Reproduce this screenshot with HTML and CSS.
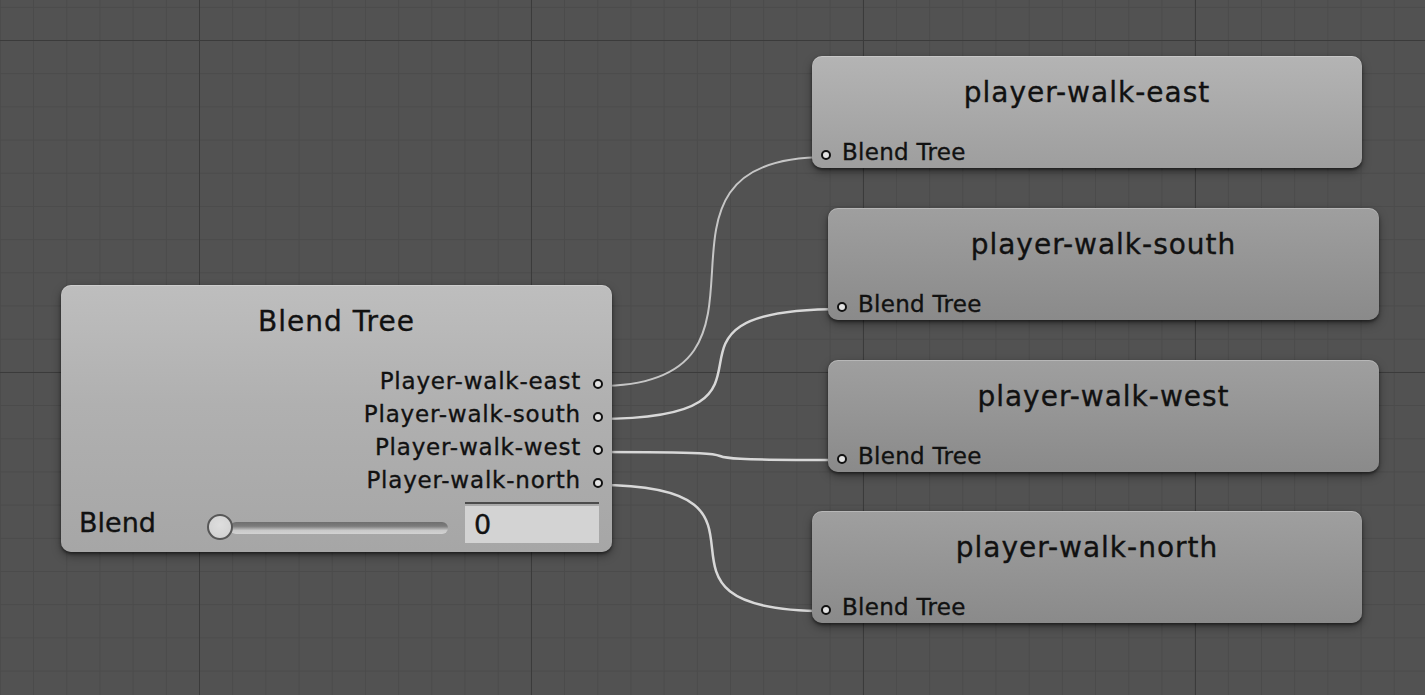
FILE: index.html
```html
<!DOCTYPE html>
<html lang="en">
<head>
<meta charset="utf-8">
<title>Blend Tree</title>
<link rel="stylesheet" href="styles.css">
</head>
<body>
<div class="graph">
  <svg class="wires" width="1425" height="695" viewBox="0 0 1425 695">
    <path class="wire wire-east" d="M598 386 C813 386 611 157 826 157"/>
    <path class="wire" d="M598 419 C823 419 617 309 842 309"/>
    <path class="wire" d="M598 452 C823 452 617 460 842 460"/>
    <path class="wire" d="M598 485 C813 485 611 611 826 611"/>
  </svg>

  <div class="node node-blend">
    <div class="node-title">Blend Tree</div>
    <ul class="outputs">
      <li class="port-row"><span>Player-walk-east</span><i class="port"></i></li>
      <li class="port-row"><span>Player-walk-south</span><i class="port"></i></li>
      <li class="port-row"><span>Player-walk-west</span><i class="port"></i></li>
      <li class="port-row"><span>Player-walk-north</span><i class="port"></i></li>
    </ul>
    <div class="param-row">
      <span class="param-label">Blend</span>
      <div class="slider">
        <div class="slider-track"></div>
        <div class="slider-thumb"></div>
      </div>
      <div class="field"><div class="field-inner">0</div></div>
    </div>
  </div>

  <div class="node node-clip node-light pos-east">
    <div class="node-title">player-walk-east</div>
    <div class="input-row"><i class="port"></i><span>Blend Tree</span></div>
  </div>
  <div class="node node-clip pos-south">
    <div class="node-title">player-walk-south</div>
    <div class="input-row"><i class="port"></i><span>Blend Tree</span></div>
  </div>
  <div class="node node-clip pos-west">
    <div class="node-title">player-walk-west</div>
    <div class="input-row"><i class="port"></i><span>Blend Tree</span></div>
  </div>
  <div class="node node-clip pos-north">
    <div class="node-title">player-walk-north</div>
    <div class="input-row"><i class="port"></i><span>Blend Tree</span></div>
  </div>
</div>
</body>
</html>
```

FILE: styles.css
```css
html, body {
  margin: 0;
  padding: 0;
  background: #525252;
}

body {
  font-family: "DejaVu Sans", "Liberation Sans", sans-serif;
}

.graph {
  position: relative;
  width: 1425px;
  height: 695px;
  overflow: hidden;
  background-color: #525252;
  background-image:
    linear-gradient(to right, #3b3b3b 1px, transparent 1px),
    linear-gradient(to bottom, #3b3b3b 1px, transparent 1px),
    linear-gradient(to right, #4b4b4b 1px, transparent 1px),
    linear-gradient(to bottom, #4b4b4b 1px, transparent 1px);
  background-size: 332px 332px, 332px 332px, 33.2px 33.2px, 33.2px 33.2px;
  background-position: 199px 40px, 199px 40px, 199px 40px, 199px 40px;
}

.wires {
  position: absolute;
  left: 0;
  top: 0;
}

.wire {
  fill: none;
  stroke: #d8d8d8;
  stroke-width: 2.5;
}

.wire-east {
  stroke: #c6c6c6;
  stroke-width: 2;
}

.node {
  position: absolute;
  box-sizing: border-box;
  display: flex;
  flex-direction: column;
  padding-top: 20px;
  border-radius: 10px;
  color: #111;
  -webkit-text-stroke: 0.35px #111;
  box-shadow:
    inset 0 1px 0 rgba(255, 255, 255, 0.25),
    0 2px 3px rgba(0, 0, 0, 0.45),
    0 4px 10px rgba(0, 0, 0, 0.35);
}

.node-title {
  font-size: 28px;
  line-height: 34px;
  height: 34px;
  text-align: center;
  letter-spacing: 1px;
  white-space: nowrap;
}

.node-blend {
  left: 61px;
  top: 285px;
  width: 551px;
  height: 267px;
  background: linear-gradient(to bottom, #bebebe, #b0b0b0 45%, #a6a6a6);
}

.outputs {
  list-style: none;
  margin: 26px 0 0;
  padding: 0 9px 0 0;
  display: flex;
  flex-direction: column;
  align-items: flex-end;
}

.port-row,
.input-row {
  display: flex;
  align-items: baseline;
  font-size: 23px;
  line-height: 33px;
  height: 33px;
  letter-spacing: 0.3px;
  white-space: nowrap;
}

.port-row {
  gap: 12px;
  letter-spacing: 0.8px;
}

.port {
  display: inline-block;
  width: 6px;
  height: 6px;
  border: 2px solid #111;
  border-radius: 50%;
  background: #e2e2e2;
}

.param-row {
  display: flex;
  align-items: center;
  height: 41px;
  margin-top: 5px;
  padding-left: 18px;
}

.param-label {
  width: 128px;
  font-size: 27px;
  line-height: 41px;
}

.slider {
  position: relative;
  width: 243px;
  height: 41px;
}

.slider-track {
  position: absolute;
  left: 23px;
  right: 2px;
  top: 20px;
  height: 12px;
  border-radius: 6px;
  background: linear-gradient(to bottom, #6f6f6f 0, #7c7c7c 35%, #9c9c9c 50%, #c9c9c9 70%, #d2d2d2 100%);
}

.slider-thumb {
  position: absolute;
  left: 0;
  top: 12px;
  box-sizing: border-box;
  width: 26px;
  height: 26px;
  border-radius: 50%;
  border: 2px solid #575757;
  background: radial-gradient(circle at 50% 40%, #dedede, #cfcfcf);
}

.field {
  margin-left: 15px;
  width: 134px;
  height: 41px;
  box-sizing: border-box;
  border-top: 2px solid #4b4b4b;
  padding-top: 2px;
}

.field-inner {
  height: 100%;
  background: #d3d3d3;
  font-size: 27px;
  line-height: 37px;
  padding-left: 9px;
}

.node-clip {
  width: 550px;
  height: 112px;
  background: linear-gradient(to bottom, #9f9f9f, #8a8a8a);
}

.node-light {
  background: linear-gradient(to bottom, #b4b4b4, #9e9e9e);
}

.input-row {
  margin-top: 26px;
  padding-left: 9px;
  gap: 11px;
}

.pos-east {
  left: 812px;
  top: 56px;
}

.pos-south {
  left: 828px;
  top: 208px;
  width: 551px;
}

.pos-west {
  left: 828px;
  top: 360px;
  width: 551px;
}

.pos-north {
  left: 812px;
  top: 511px;
}
```
